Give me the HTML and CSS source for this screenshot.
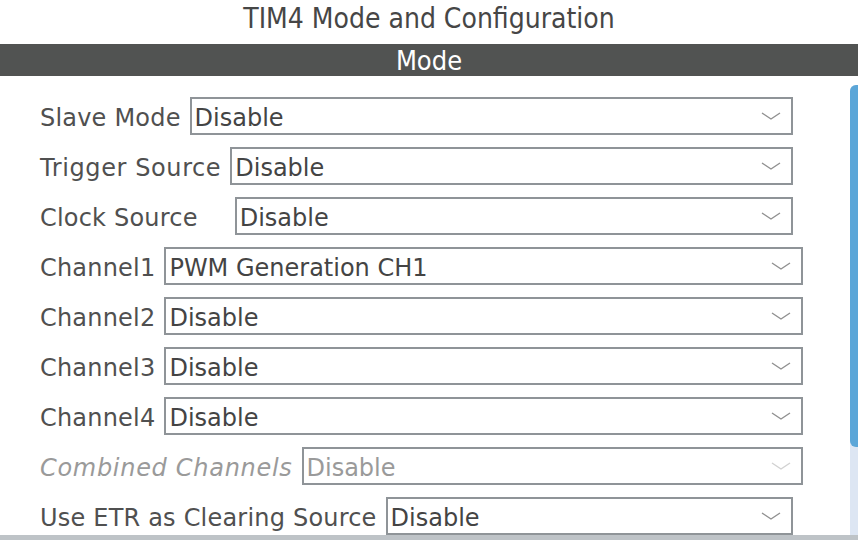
FILE: index.html
```html
<!DOCTYPE html>
<html>

<head>
    <meta http-equiv="content-type" content="text/html; charset=utf-8" />
    <title>TIM4 Mode and Configuration</title>
    <link rel="stylesheet" href="styles.css">
</head>

<body>
    <div class="panel">
        <h1 class="panel-title">TIM4 Mode and Configuration</h1>
        <div class="section-bar">Mode</div>

        <div class="section-body">
            <div class="form">
                <div class="form-row">
                    <span class="form-label">Slave Mode</span>
                    <div class="combo"><span class="combo-value">Disable</span><span class="chevron"></span></div>
                </div>
                <div class="form-row">
                    <span class="form-label form-label-loose">Trigger Source</span>
                    <div class="combo"><span class="combo-value">Disable</span><span class="chevron"></span></div>
                </div>
                <div class="form-row">
                    <span class="form-label form-label-wide">Clock Source</span>
                    <div class="combo"><span class="combo-value">Disable</span><span class="chevron"></span></div>
                </div>
                <div class="form-row form-row-long">
                    <span class="form-label">Channel1</span>
                    <div class="combo"><span class="combo-value">PWM Generation CH1</span><span class="chevron"></span></div>
                </div>
                <div class="form-row form-row-long">
                    <span class="form-label">Channel2</span>
                    <div class="combo"><span class="combo-value">Disable</span><span class="chevron"></span></div>
                </div>
                <div class="form-row form-row-long">
                    <span class="form-label">Channel3</span>
                    <div class="combo"><span class="combo-value">Disable</span><span class="chevron"></span></div>
                </div>
                <div class="form-row form-row-long">
                    <span class="form-label">Channel4</span>
                    <div class="combo"><span class="combo-value">Disable</span><span class="chevron"></span></div>
                </div>
                <div class="form-row form-row-long disabled">
                    <span class="form-label">Combined Channels</span>
                    <div class="combo"><span class="combo-value">Disable</span><span class="chevron"></span></div>
                </div>
                <div class="form-row">
                    <span class="form-label">Use ETR as Clearing Source</span>
                    <div class="combo"><span class="combo-value">Disable</span><span class="chevron"></span></div>
                </div>
            </div>

            <!-- scrollbar (cut off on the right) -->
            <div class="scroll-track">
                <div class="scroll-thumb"></div>
            </div>
        </div>

        <div class="bottom-edge"></div>
    </div>
</body>

</html>
```

FILE: styles.css
```css
html,
body {
    margin: 0;
    padding: 0;
    height: 540px;
    overflow: hidden;
    background: #fff;
}

.panel {
    display: flex;
    flex-direction: column;
    height: 540px;
    font-family: "DejaVu Sans", "Liberation Sans", sans-serif;
}

.panel-title {
    margin: 0;
    height: 44px;
    line-height: 38px;
    text-align: center;
    font-family: "DejaVu Sans Condensed", "DejaVu Sans", sans-serif;
    font-stretch: condensed;
    font-weight: normal;
    font-size: 28px;
    color: #464646;
}

.section-bar {
    height: 32px;
    line-height: 33px;
    background: #515352;
    color: #fff;
    text-align: center;
    font-family: "DejaVu Sans Condensed", "DejaVu Sans", sans-serif;
    font-stretch: condensed;
    font-size: 27px;
}

.section-body {
    flex: 1;
    display: flex;
    min-height: 0;
}

.form {
    flex: 1;
    display: flex;
    flex-direction: column;
    gap: 12px;
    padding: 21px 0 0 40px;
}

.form-row {
    display: flex;
    align-items: center;
    gap: 9px;
    height: 38px;
    padding-right: 57px;
}

.form-row-long {
    padding-right: 47px;
}

.form-label {
    padding-top: 4px;
    font-size: 24px;
    letter-spacing: 0.2px;
    color: #505050;
    white-space: nowrap;
}

.form-label-loose {
    letter-spacing: 0.6px;
}

.form-label-wide {
    margin-right: 28px;
}

.combo {
    flex: 1;
    display: flex;
    align-items: center;
    height: 38px;
    box-sizing: border-box;
    border: 2px solid #8f9498;
    padding: 0 10px 0 3px;
}

.combo-value {
    flex: 1;
    padding-top: 4px;
    font-size: 24px;
    color: #444;
    white-space: nowrap;
}

.chevron {
    width: 20px;
    height: 8px;
    background: url("data:image/svg+xml,%3Csvg xmlns='http://www.w3.org/2000/svg' width='20' height='8'%3E%3Cpolyline points='1,1 10,7 19,1' fill='none' stroke='%23909090' stroke-width='1.4'/%3E%3C/svg%3E") no-repeat center;
}

.disabled .form-label {
    font-style: italic;
    letter-spacing: 0.7px;
    color: #9a9a9a;
}

.disabled .combo-value {
    color: #9a9a9a;
}

.disabled .chevron {
    opacity: 0.4;
}

.scroll-track {
    width: 8px;
    margin-top: 9px;
    background: #dde6f3;
    border-top-left-radius: 6px;
}

.scroll-thumb {
    height: 362px;
    background: #5ba6d8;
    border-radius: 6px 0 0 6px;
}

.bottom-edge {
    height: 5px;
    background: #bec3c7;
}
```
